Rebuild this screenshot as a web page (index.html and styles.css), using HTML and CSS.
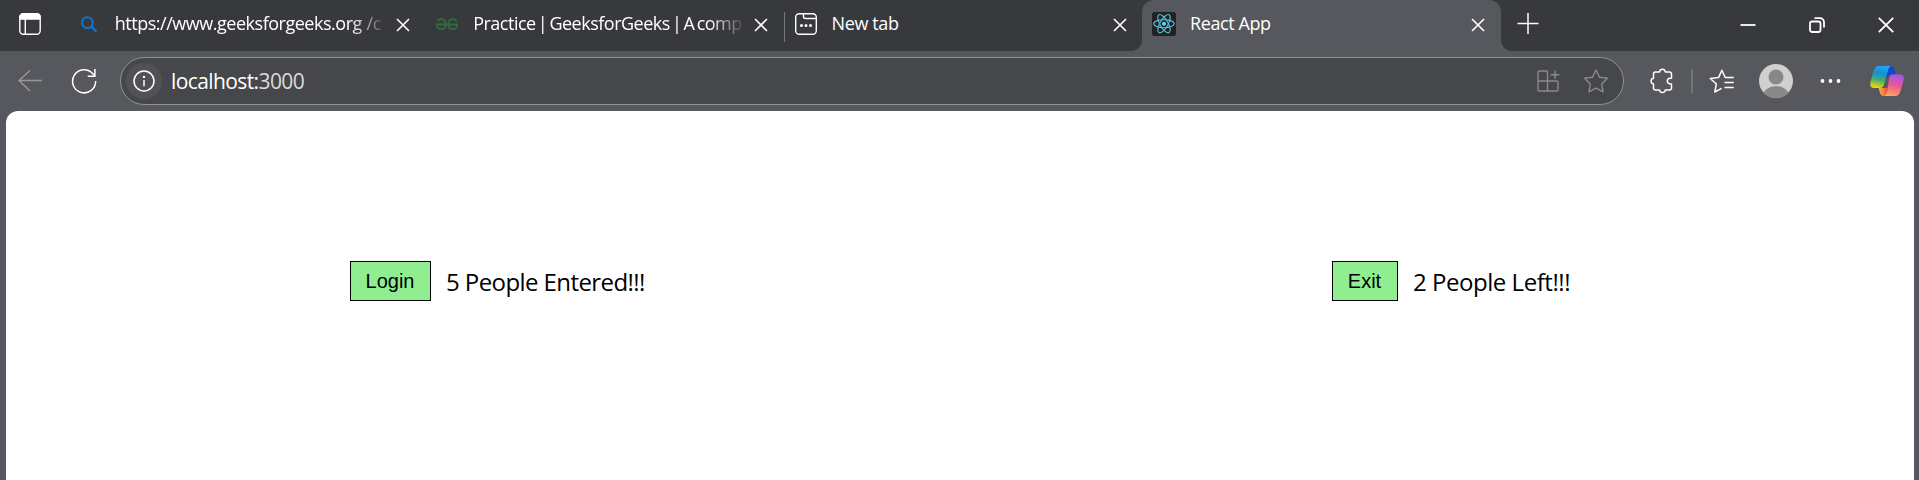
FILE: index.html
```html
<!DOCTYPE html>
<html lang="en">
<head>
<meta charset="utf-8">
<title>React App</title>
<link rel="stylesheet" href="styles.css">
</head>
<body>
<div class="browser">
  <header class="tabstrip">
    <svg class="tab-actions" width="22" height="22" viewBox="0 0 22 22" fill="none" stroke="#fff" stroke-width="1.4"><rect x=".8" y=".8" width="20.4" height="20.4" rx="3.5"/><path d="M1 6V4a3 3 0 0 1 3-3h14a3 3 0 0 1 3 3v2z" fill="#fff"/><path d="M6.3 6v15"/></svg>
    <div class="tab">
      <svg class="favicon" width="24" height="24" viewBox="0 0 24 24" fill="none" stroke="#1473c8" stroke-width="2"><circle cx="10.4" cy="10.6" r="5.4"/><path d="M14.2 14.4l5.2 5.2" stroke-width="2.2"/></svg>
      <span class="tab-title fade"><span class="t-search">https://www.geeksforgeeks.org /c</span></span>
      <svg class="close" width="14" height="14" viewBox="0 0 14 14"><path d="M1 1l12 12M13 1L1 13"/></svg>
    </div>
    <div class="tab">
      <svg class="favicon" width="24" height="24" viewBox="0 0 24 24" fill="none" stroke="#2f6b3d" stroke-width="1.8"><path d="M1 12.500h22M2.200 9.400C3 7.800 4.400 7 6 7c3 0 4.700 2.200 4.700 5.200 0 3.200-1.700 4.900-4.600 4.900-2.600 0-4.300-1.600-4.400-4.600M21.800 9.400C21 7.800 19.600 7 18 7c-3 0-4.700 2.200-4.700 5.200 0 3.200 1.700 4.900 4.600 4.900 2.600 0 4.300-1.600 4.400-4.600"/></svg>
      <span class="tab-title fade"><span class="t-practice">Practice | GeeksforGeeks | A comp</span></span>
      <svg class="close" width="14" height="14" viewBox="0 0 14 14"><path d="M1 1l12 12M13 1L1 13"/></svg>
    </div>
    <div class="tab divided">
      <svg class="favicon" width="24" height="24" viewBox="0 0 24 24" fill="none" stroke="#fff" stroke-width="1.4"><rect x="1.700" y="1.700" width="20.600" height="20.600" rx="3.500"/><path d="M9.500 2v2.500q0 2 2 2H22"/><g fill="#fff" stroke="none"><circle cx="7.500" cy="13.500" r="1.500"/><circle cx="12" cy="13.500" r="1.500"/><circle cx="16.500" cy="13.500" r="1.500"/></g></svg>
      <span class="tab-title"><span class="t-new">New tab</span></span>
      <svg class="close" width="14" height="14" viewBox="0 0 14 14"><path d="M1 1l12 12M13 1L1 13"/></svg>
    </div>
    <div class="tab active">
      <svg class="favicon" width="24" height="24" viewBox="0 0 24 24" fill="none" stroke="#53c1de" stroke-width="1.150"><rect width="24" height="24" rx="2.500" fill="#222" stroke="none"/><ellipse cx="12" cy="11.700" rx="10.300" ry="4"/><ellipse cx="12" cy="11.700" rx="10.300" ry="4" transform="rotate(60 12 11.700)"/><ellipse cx="12" cy="11.700" rx="10.300" ry="4" transform="rotate(120 12 11.700)"/><circle cx="12" cy="11.700" r="2" fill="#61dafb" stroke="none"/></svg>
      <span class="tab-title"><span class="t-react">React App</span></span>
      <svg class="close" width="14" height="14" viewBox="0 0 14 14"><path d="M1 1l12 12M13 1L1 13"/></svg>
    </div>
    <svg class="new-tab" width="22" height="22" viewBox="0 0 22 22" fill="none" stroke="#fff" stroke-width="1.500"><path d="M.5 10.500h21M11 0v21"/></svg>
    <div class="window-controls">
      <svg width="16" height="16" viewBox="0 0 16 16"><path d="M.500 8h15"/></svg>
      <svg width="16" height="16" viewBox="0 0 16 16"><rect x="1" y="4.500" width="10.500" height="10.500" rx="2.200"/><path d="M5.500 1.200h5.500a4 4 0 0 1 4 4v5.300"/></svg>
      <svg width="16" height="16" viewBox="0 0 16 16"><path d="M.8 .8l14.400 14.400M15.200 .8L.8 15.200"/></svg>
    </div>
  </header>

  <nav class="toolbar">
    <svg class="back" width="24" height="22" viewBox="0 0 24 22" fill="none" stroke="#97989a" stroke-width="1.400"><path d="M24 10.500H1M12 .500L1 10.500l11 10.500"/></svg>
    <svg class="reload" width="26" height="26" viewBox="0 0 26 26" fill="none" stroke="#fff" stroke-width="1.500"><path d="M24.600 13A11.500 11.500 0 1 1 21.800 5.800l1.600 1.800"/><path d="M23.900 1v7.200h-7.200"/></svg>
    <div class="address">
      <span class="site-info"><svg width="22" height="22" viewBox="0 0 22 22" fill="none" stroke="#fff" stroke-width="1.500"><circle cx="11" cy="11" r="10"/><path d="M11 10v6.300"/><circle cx="11" cy="6.900" r="1.200" fill="#fff" stroke="none"/></svg></span>
      <span class="url">localhost:<span class="port">3000</span></span>
      <svg class="apps" width="23" height="24" viewBox="0 0 23 24" fill="none" stroke="#8a8b8e" stroke-width="1.400"><path d="M10.500 12V3.500q0-1.500-1.500-1.500H2.500Q1 2 1 3.500v17Q1 22 2.500 22h17q1.500 0 1.500-1.500v-7q0-1.500-1.500-1.500H1M10.500 12v10M18 1.500v8.500M13.700 5.700h8.600"/></svg>
      <svg class="star" width="26" height="26" viewBox="0 0 26 26" fill="none" stroke="#8a8b8e" stroke-width="1.400" stroke-linejoin="round"><path d="M13 2l3.500 7.200 8 1.100-5.800 5.600 1.400 8L13 20.200 5.900 23.900l1.400-8-5.800-5.600 8-1.100z"/></svg>
    </div>
    <svg class="extensions" width="24" height="26" viewBox="0 0 24 26" fill="none" stroke="#fff" stroke-width="1.500" stroke-linejoin="round"><path d="M5.500 4h4q.4-2.800 2.900-2.800T15.300 4h4.200q2 0 2 2v4.200h-1.200q-3 .2-3 2.900t3 2.900h1.200V20q0 2-2 2h-4.200q-.4 2.600-2.900 2.600T9.500 22h-4q-2 0-2-2v-4Q1 15.500 1 13.100t2.500-2.900V6q0-2 2-2z"/></svg>
    <i class="separator"></i>
    <svg class="favorites" width="26" height="26" viewBox="0 0 26 26" fill="none" stroke="#fff" stroke-width="1.500" stroke-linejoin="round"><path d="M24.800 9.500h-8.600L12.900 2.200 9.600 9.400l-8.300 1.100 6 5.500-1.500 8 6.800-3.600M15.500 14.500h9.300M15.500 19.500h9.300"/></svg>
    <svg class="avatar" width="34" height="34" viewBox="0 0 34 34"><defs><clipPath id="disc"><circle cx="17" cy="17" r="17"/></clipPath></defs><g clip-path="url(#disc)"><rect width="34" height="34" fill="#d2d0ce"/><circle cx="17" cy="13" r="7.500" fill="#8a8886"/><ellipse cx="17" cy="32" rx="13" ry="10" fill="#8a8886"/></g></svg>
    <svg class="more" width="21" height="6" viewBox="0 0 21 6" fill="#fff"><circle cx="2.500" cy="3" r="1.900"/><circle cx="10.500" cy="3" r="1.900"/><circle cx="18.500" cy="3" r="1.900"/></svg>
    <svg class="copilot" width="34" height="32" viewBox="0 0 34 32">
      <defs>
        <linearGradient id="cool" x1=".6" y1="0" x2=".4" y2="1"><stop offset="0" stop-color="#20a7f5"/><stop offset=".35" stop-color="#158fd0"/><stop offset=".65" stop-color="#47ad70"/><stop offset="1" stop-color="#f5d400"/></linearGradient>
        <linearGradient id="warm" x1=".6" y1="0" x2=".4" y2="1"><stop offset="0" stop-color="#a455ee"/><stop offset=".5" stop-color="#e95795"/><stop offset="1" stop-color="#ffa45a"/></linearGradient>
        <linearGradient id="fold" x1="0" y1="0" x2="1" y2="0"><stop offset="0" stop-color="#ffbd35"/><stop offset="1" stop-color="#f04a3b"/></linearGradient>
      </defs>
      <path d="M16 1h4.500q3 0 4 4l1.200 4.500h-4q-3.500 0-4.800 4z" fill="#1746cf"/>
      <path d="M17.500 23l-1.200 8h-2.500q-3 0-3.900-3.500l-1.200-4.500z" fill="url(#fold)"/>
      <path d="M8.500 1h13q-2.300.3-3.200 3.500L14 19.500Q13 23 9.500 23H4Q-.8 23 .5 17L3.500 6Q5 1 8.500 1z" fill="url(#cool)"/>
      <path d="M22.500 9.500H30q4.800 0 3.500 6l-3 10.500q-1.500 5-5 5h-12q2.500-.3 3.400-3.500L19.200 13q1-3.500 3.300-3.500z" fill="url(#warm)"/>
    </svg>
  </nav>

  <main class="page">
    <section class="counter">
      <button class="action">Login</button>
      <span class="count entered">5 People Entered!!!</span>
    </section>
    <section class="counter exit">
      <button class="action">Exit</button>
      <span class="count left">2 People Left!!!</span>
    </section>
  </main>
</div>
</body>
</html>
```
FILE: styles.css
```css
* { box-sizing: border-box; }
body { margin: 0; overflow: hidden; font-family: "Open Sans", "Noto Sans", sans-serif; background: #57585d; }
svg { display: block; flex: none; }

.browser { display: flex; flex-direction: column; width: 1919px; height: 480px; }

.tabstrip { display: flex; height: 51px; flex: none; background: #38393c; color: #fff; }
.tab-actions { margin: 13px 26px 0 19px; }
.tab { position: relative; display: flex; flex: none; width: 358.4px; height: 51px; padding-left: 9.8px; }
.favicon { margin-top: 12px; }
.tab-title { width: 272px; height: 46px; margin-left: 14px; overflow: hidden; white-space: nowrap; font-size: 18px; line-height: 46px; }
.fade { -webkit-mask-image: linear-gradient(to right, #000 235px, transparent 273px); mask-image: linear-gradient(to right, #000 235px, transparent 273px); }
.close { margin: 18px 0 0 9px; stroke: #fff; stroke-width: 1.6; fill: none; }
.divided::before { content: ""; position: absolute; left: 0; top: 12px; width: 1px; height: 30px; background: #77787b; }
.active { background: #57585d; border-radius: 12px 12px 0 0; }
.active::before, .active::after { content: ""; position: absolute; bottom: 0; width: 10px; height: 10px; }
.active::before { left: -10px; background: radial-gradient(circle at 0 0, #38393c 9.5px, #57585d 10px); }
.active::after { right: -10px; background: radial-gradient(circle at 100% 0, #38393c 9.5px, #57585d 10px); }
.new-tab { margin: 13px 0 0 16px; }
.window-controls { display: flex; gap: 53px; margin: 17px 25px 0 auto; }
.window-controls svg { fill: none; stroke: #fff; stroke-width: 1.8; }

.t-search { letter-spacing: -0.48px; word-spacing: 0.5px; }
.t-practice { letter-spacing: -0.5px; word-spacing: -2px; }
.t-new { letter-spacing: -0.4px; }
.t-react { letter-spacing: -0.4px; }

.toolbar { display: flex; align-items: center; height: 60px; flex: none; background: #57585d; }
.back { margin-left: 18px; }
.reload { margin-left: 29px; }
.address { display: flex; align-items: center; width: 1504px; height: 48px; margin-left: 23px; padding-left: 5px; border: 1.5px solid #909194; border-radius: 24px; background: #46474a; }
.site-info { display: flex; align-items: center; justify-content: center; width: 36px; height: 36px; border-radius: 50%; background: #515256; }
.url { flex: 1; padding-left: 9px; color: #fff; font-size: 21px; line-height: 46px; letter-spacing: -0.6px; }
.port { color: #dcdcdd; }
.apps { margin-right: 23px; }
.star { margin-right: 14px; }
.extensions { margin-left: 26px; }
.separator { width: 2px; height: 24px; margin-left: 17px; background: #747579; }
.favorites { margin-left: 16px; }
.avatar { margin-left: 24px; }
.more { margin-left: 27px; }
.copilot { margin-left: 29px; }

.page { display: flex; flex: 1; margin: 0 5px 0 6px; padding-top: 150px; border-radius: 12px 12px 0 0; background: #fff; color: #000; }
.counter { display: flex; flex: none; align-items: flex-start; width: 982px; padding-left: 344px; }
.exit { width: 926px; }
.action { flex: none; width: 81px; height: 40px; padding: 0 1px 0 0; border: 1px solid #000; border-radius: 0; background: #90ee90; color: #000; font: 20px/38px "Liberation Sans", Arial, sans-serif; text-align: center; }
.exit .action { width: 66px; }
.count { margin-left: 15px; font-size: 24px; line-height: 42px; white-space: nowrap; }
.entered { letter-spacing: -0.58px; }
.left { letter-spacing: -0.46px; }
```
